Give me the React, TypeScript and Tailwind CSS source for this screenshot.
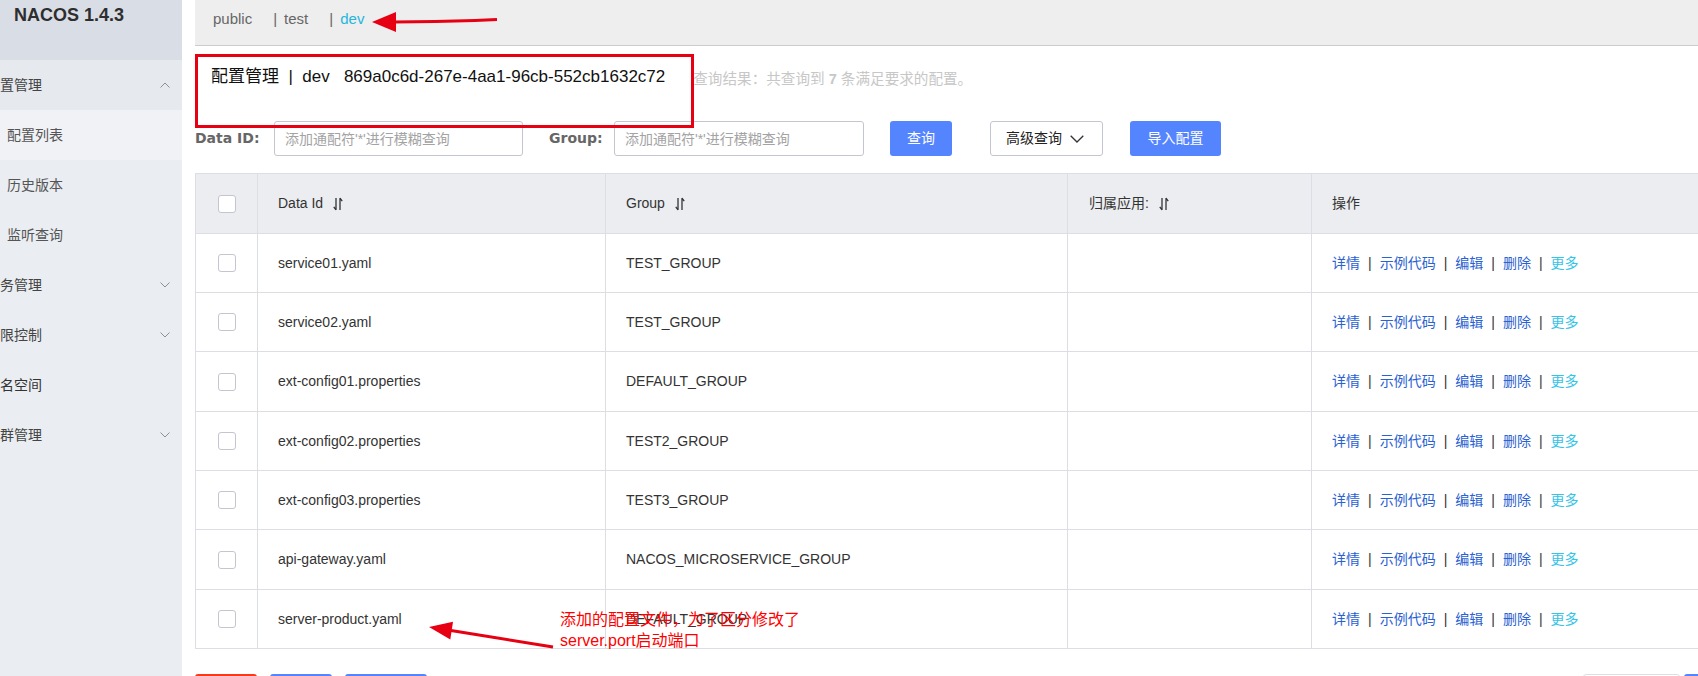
import React from "react";

const rows = [
  { id: "service01.yaml", group: "TEST_GROUP", h: "h-[59px]" },
  { id: "service02.yaml", group: "TEST_GROUP", h: "h-[59px]" },
  { id: "ext-config01.properties", group: "DEFAULT_GROUP", h: "h-[60px]" },
  { id: "ext-config02.properties", group: "TEST2_GROUP", h: "h-[59px]" },
  { id: "ext-config03.properties", group: "TEST3_GROUP", h: "h-[59px]" },
  { id: "api-gateway.yaml", group: "NACOS_MICROSERVICE_GROUP", h: "h-[60px]" },
  { id: "server-product.yaml", group: "DEFAULT_GROUP", h: "h-[59px]" },
];

function Chevron({ up }: { up?: boolean }) {
  return (
    <svg width="10" height="6" viewBox="0 0 10 6" fill="none" stroke="#8a8f99" strokeWidth="1">
      {up ? <path d="M0.5 5.5L5 1l4.5 4.5" /> : <path d="M0.5 0.5L5 5l4.5-4.5" />}
    </svg>
  );
}

function SortIcon() {
  return (
    <svg width="10" height="14" viewBox="0 0 10 14" fill="none" stroke="#333" strokeWidth="1.3" className="ml-[10px]">
      <path d="M3 1v12M3 13L0.8 9.8" />
      <path d="M7 13V1M7 1l2.2 3.2" />
    </svg>
  );
}

function Checkbox() {
  return <div className="h-[18px] w-[18px] rounded-[3px] border border-[#c4c6cf] bg-white" />;
}

function MenuItem({
  label,
  sub,
  chevron,
  active,
  dark,
}: {
  label: string;
  sub?: boolean;
  chevron?: "up" | "down";
  active?: boolean;
  dark?: boolean;
}) {
  return (
    <div
      className={`flex h-[50px] items-center justify-between pr-[12px] text-[14px] ${
        active ? "bg-[#f0f2f5]" : ""
      } ${sub ? "pl-[7px] text-[#555]" : "ml-[-14px]"} ${dark ? "text-[#333]" : sub ? "" : "text-[#444]"}`}
    >
      <span>{label}</span>
      {chevron && <Chevron up={chevron === "up"} />}
    </div>
  );
}

function Ops() {
  const sep = <span className="mx-2 text-[#333]">|</span>;
  return (
    <div className="flex items-center text-[14px] text-[#2a62d2]">
      <span>详情</span>
      {sep}
      <span>示例代码</span>
      {sep}
      <span>编辑</span>
      {sep}
      <span>删除</span>
      {sep}
      <span className="text-[#36c3e6]">更多</span>
    </div>
  );
}

export default function App() {
  return (
    <div className="relative flex h-[676px] w-[1698px] overflow-hidden bg-white font-['Liberation_Sans','Noto_Sans_CJK_SC',sans-serif] text-[#333]">
      <aside className="w-[182px] shrink-0 overflow-hidden bg-[#eaedf1]">
        <div className="h-[60px] bg-[#d9dde5] pl-[14px] pt-[4px] text-[18px] font-bold leading-[22px] text-[#2e2e2e]">
          NACOS 1.4.3
        </div>
        <div className="bg-[#e6e9ee]">
          <MenuItem label="配置管理" chevron="up" />
        </div>
        <MenuItem label="配置列表" sub active />
        <MenuItem label="历史版本" sub />
        <MenuItem label="监听查询" sub />
        <MenuItem label="服务管理" chevron="down" />
        <MenuItem label="权限控制" chevron="down" />
        <MenuItem label="命名空间" dark />
        <MenuItem label="集群管理" chevron="down" />
      </aside>

      <main className="flex-1 overflow-hidden bg-white pl-[13px]">
        <div className="flex h-[46px] items-center border-b border-[#cccccc] bg-[#eeeeee] pb-[6px] pl-[18px] text-[15px] text-[#666]">
          <span>public</span>
          <span className="ml-[21px] mr-[7px]">|</span>
          <span>test</span>
          <span className="ml-[21px] mr-[7px]">|</span>
          <span className="text-[#27b6dc]">dev</span>
        </div>

        <div className="flex h-[75px] items-start pl-[16px] pt-[19px]">
          <span className="whitespace-pre text-[17px] leading-[24px] text-[#111]">
            {"配置管理  |  dev   869a0c6d-267e-4aa1-96cb-552cb1632c72"}
          </span>
          <span className="ml-[28px] mt-[2px] text-[14.6px] leading-[24px] text-[#c7c7c7]">
            查询结果：共查询到 <b>7</b> 条满足要求的配置。
          </span>
        </div>

        <div className="flex h-[35px] items-center text-[14px]">
          <span className="w-[79px] font-['DejaVu_Sans',sans-serif] font-bold text-[#666]">Data ID:</span>
          <input
            className="h-[35px] w-[249px] rounded-[3px] border border-[#c4c6cf] px-[10px] outline-none placeholder:text-[#a3a3a3]"
            placeholder="添加通配符'*'进行模糊查询"
          />
          <span className="ml-[26px] w-[65px] font-['DejaVu_Sans',sans-serif] font-bold text-[#666]">Group:</span>
          <input
            className="h-[35px] w-[250px] rounded-[3px] border border-[#c4c6cf] px-[10px] outline-none placeholder:text-[#a3a3a3]"
            placeholder="添加通配符'*'进行模糊查询"
          />
          <button className="ml-[26px] h-[35px] w-[62px] rounded-[3px] bg-[#5584ff] text-white">查询</button>
          <button className="ml-[38px] flex h-[35px] w-[113px] items-center rounded-[3px] border border-[#c4c6cf] bg-white pl-[15px] text-[#222]">
            高级查询
            <svg width="14" height="8" viewBox="0 0 14 8" fill="none" stroke="#333" strokeWidth="1.3" className="ml-[8px]">
              <path d="M0.7 0.7L7 7l6.3-6.3" />
            </svg>
          </button>
          <button className="ml-[27px] h-[35px] w-[91px] rounded-[3px] bg-[#5584ff] text-white">导入配置</button>
        </div>

        <div className="mt-[17px] w-[1530px] border-l border-t border-[#dcdee3] text-[14px]">
          <div className="flex h-[60px] border-b border-[#dcdee3] bg-[#ebedf1]">
            <div className="flex w-[62px] items-center justify-center border-r border-[#dcdee3]">
              <Checkbox />
            </div>
            <div className="flex w-[348px] items-center border-r border-[#dcdee3] pl-[20px]">
              Data Id <SortIcon />
            </div>
            <div className="flex w-[462px] items-center border-r border-[#dcdee3] pl-[20px]">
              Group <SortIcon />
            </div>
            <div className="flex w-[244px] items-center border-r border-[#dcdee3] pl-[21px]">
              归属应用: <SortIcon />
            </div>
            <div className="flex flex-1 items-center pl-[20px]">操作</div>
          </div>
          {rows.map((r) => (
            <div key={r.id} className={`flex ${r.h} border-b border-[#dcdee3]`}>
              <div className="flex w-[62px] items-center justify-center border-r border-[#dcdee3]">
                <Checkbox />
              </div>
              <div className="flex w-[348px] items-center border-r border-[#dcdee3] pl-[20px]">{r.id}</div>
              <div className="flex w-[462px] items-center border-r border-[#dcdee3] pl-[20px]">{r.group}</div>
              <div className="w-[244px] border-r border-[#dcdee3]" />
              <div className="flex flex-1 items-center pl-[20px]">
                <Ops />
              </div>
            </div>
          ))}
        </div>

        <div className="mt-[25px] flex">
          <div className="h-[28px] w-[62px] rounded-[3px] bg-[#f8391a]" />
          <div className="ml-[13px] h-[28px] w-[62px] rounded-[3px] bg-[#5584ff]" />
          <div className="ml-[13px] h-[28px] w-[82px] rounded-[3px] bg-[#5584ff]" />
          <div className="ml-auto mr-[-30px] flex gap-[4px]">
            <div className="h-[28px] w-[97px] rounded-[3px] border border-[#dcdee3] bg-white" />
            <div className="h-[28px] w-[44px] rounded-[3px] bg-[#5584ff]" />
          </div>
        </div>
      </main>

      {/* annotations drawn over the screenshot */}
      <div className="pointer-events-none absolute left-[195px] top-[54px] h-[74px] w-[499px] border-[3px] border-[#e60012]" />
      <div className="pointer-events-none absolute left-[560px] top-[609px] text-[16px] leading-[21px] text-[#ff0000]">
        <div>添加的配置文件，为了区分修改了</div>
        <div>server.port启动端口</div>
      </div>
      <svg className="pointer-events-none absolute left-0 top-0" width="1698" height="676" viewBox="0 0 1698 676">
        <polygon points="372,22 396,12 396,32" fill="#e60012" />
        <path d="M394 22L435 21.5L475 20.5L497 19.5" stroke="#e60012" strokeWidth="3" fill="none" />
        <polygon points="429,627 453,621.8 450.3,639.6" fill="#e60012" />
        <path d="M451 630.6L553 647" stroke="#e60012" strokeWidth="3" fill="none" />
      </svg>
    </div>
  );
}
